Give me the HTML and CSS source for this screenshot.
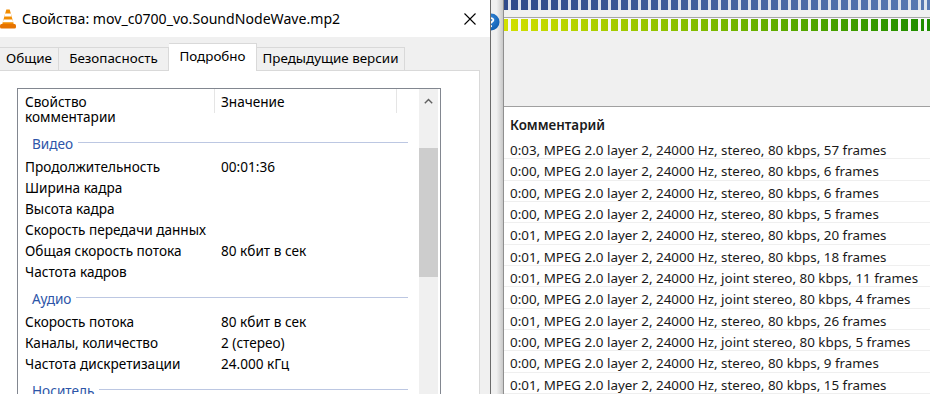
FILE: index.html
```html
<!DOCTYPE html>
<html lang="ru">
<head>
    <meta charset="UTF-8">
    <title>Свойства: mov_c0700_vo.SoundNodeWave.mp2</title>
    <link rel="stylesheet" href="styles.css">
</head>
<body>
    <div class="screen">
        <div class="dialog">
            <div class="titlebar">
                <svg class="vlc" width="16" height="20" viewBox="0 0 16 20">
                    <path d="M6.3 0.5 L9.7 0.5 L14 16 L2 16 Z" fill="#f28c00"/>
                    <path d="M5.2 4.5 L10.8 4.5 L11.6 7.5 L4.4 7.5 Z" fill="#fff"/>
                    <path d="M3.6 10.5 L12.4 10.5 L13.2 13.3 L2.8 13.3 Z" fill="#fff"/>
                    <rect x="0" y="15" width="16" height="4.5" rx="1.5" fill="#e67300"/>
                </svg>
                <span class="title">Свойства: mov_c0700_vo.SoundNodeWave.mp2</span>
                <svg class="close" width="12" height="12" viewBox="0 0 12 12">
                    <path d="M0.5 0.5 L11.5 11.5 M11.5 0.5 L0.5 11.5" stroke="#000" stroke-width="1.1"/>
                </svg>
            </div>
            <div class="tabs">
                <div class="tab tab-general">Общие</div>
                <div class="tab tab-security">Безопасность</div>
                <div class="tab tab-details active">Подробно</div>
                <div class="tab tab-versions">Предыдущие версии</div>
            </div>
            <div class="panel">
                <div class="listbox">
                    <div class="list">
                        <div class="list-head">
                            <div class="col-name">Свойство</div>
                            <div class="col-value">Значение</div>
                        </div>
                        <div class="row row-cut">комментарии</div>

                        <div class="group"><span>Видео</span><i></i></div>
                        <div class="row"><span class="name">Продолжительность</span><span class="value">00:01:36</span></div>
                        <div class="row"><span class="name">Ширина кадра</span></div>
                        <div class="row"><span class="name">Высота кадра</span></div>
                        <div class="row"><span class="name">Скорость передачи данных</span></div>
                        <div class="row"><span class="name">Общая скорость потока</span><span class="value">80 кбит в сек</span></div>
                        <div class="row"><span class="name">Частота кадров</span></div>

                        <div class="group"><span>Аудио</span><i></i></div>
                        <div class="row"><span class="name">Скорость потока</span><span class="value">80 кбит в сек</span></div>
                        <div class="row"><span class="name">Каналы, количество</span><span class="value">2 (стерео)</span></div>
                        <div class="row"><span class="name">Частота дискретизации</span><span class="value">24.000 кГц</span></div>

                        <div class="group"><span>Носитель</span><i></i></div>
                    </div>
                    <div class="scrollbar">
                        <div class="scroll-up">
                            <svg width="9" height="6" viewBox="0 0 9 6"><path d="M0.8 5.2 L4.5 1.5 L8.2 5.2" fill="none" stroke="#606060" stroke-width="1.4"/></svg>
                        </div>
                        <div class="thumb"></div>
                    </div>
                </div>
            </div>
        </div>

        <div class="edge">
            <svg class="help" width="18" height="18" viewBox="0 0 18 18">
                <defs>
                    <radialGradient id="helpFill" cx="40%" cy="35%" r="70%">
                        <stop offset="0" stop-color="#3d8fe0"/>
                        <stop offset="1" stop-color="#0d5cb0"/>
                    </radialGradient>
                </defs>
                <circle cx="9" cy="9" r="8.5" fill="url(#helpFill)"/>
                <path d="M6.6 7 C6.6 4.6 11.4 4.6 11.4 7 C11.4 8.6 9 8.6 9 10.6" fill="none" stroke="#fff" stroke-width="1.8"/>
                <circle cx="9" cy="13.2" r="1.1" fill="#fff"/>
            </svg>
        </div>

        <div class="app">
            <div class="meter meter-blue"></div>
            <div class="meter-sep"></div>
            <div class="meter-track">
                <div class="meter meter-green"></div>
            </div>
            <div class="comments">
                <div class="comments-head">Комментарий</div>
                <div class="comment">0:03, MPEG 2.0 layer 2, 24000 Hz, stereo, 80 kbps, 57 frames</div>
                <div class="comment">0:00, MPEG 2.0 layer 2, 24000 Hz, stereo, 80 kbps, 6 frames</div>
                <div class="comment">0:00, MPEG 2.0 layer 2, 24000 Hz, stereo, 80 kbps, 6 frames</div>
                <div class="comment">0:00, MPEG 2.0 layer 2, 24000 Hz, stereo, 80 kbps, 5 frames</div>
                <div class="comment">0:01, MPEG 2.0 layer 2, 24000 Hz, stereo, 80 kbps, 20 frames</div>
                <div class="comment">0:01, MPEG 2.0 layer 2, 24000 Hz, stereo, 80 kbps, 18 frames</div>
                <div class="comment">0:01, MPEG 2.0 layer 2, 24000 Hz, joint stereo, 80 kbps, 11 frames</div>
                <div class="comment">0:00, MPEG 2.0 layer 2, 24000 Hz, joint stereo, 80 kbps, 4 frames</div>
                <div class="comment">0:01, MPEG 2.0 layer 2, 24000 Hz, stereo, 80 kbps, 26 frames</div>
                <div class="comment">0:00, MPEG 2.0 layer 2, 24000 Hz, joint stereo, 80 kbps, 5 frames</div>
                <div class="comment">0:00, MPEG 2.0 layer 2, 24000 Hz, stereo, 80 kbps, 9 frames</div>
                <div class="comment">0:01, MPEG 2.0 layer 2, 24000 Hz, stereo, 80 kbps, 15 frames</div>
            </div>
        </div>
    </div>
</body>
</html>
```

FILE: styles.css
```css
:root {
    --win-gray: #f0f0f0;
    --tab-border: #d9d9d9;
    --list-border: #828790;
    --group-blue: #2d55a8;
    --group-line: #bcc7e2;
    --text-color: #000;
}

* {
    box-sizing: border-box;
    margin: 0;
    padding: 0;
}

body {
    font-family: 'Noto Sans', 'DejaVu Sans', sans-serif;
    color: var(--text-color);
    background-color: var(--win-gray);
    overflow: hidden;
}

.screen {
    display: flex;
    width: 930px;
    height: 394px;
    overflow: hidden;
}

/* ---- диалог свойств ---- */

.dialog {
    width: 491px;
    flex-shrink: 0;
    background-color: var(--win-gray);
    border-right: 1px solid #6b6b6b;
    display: flex;
    flex-direction: column;
    position: relative;
    z-index: 2;
}

.titlebar {
    height: 37px;
    background-color: #fff;
    display: flex;
    align-items: center;
    padding-right: 14px;
}

.vlc {
    margin-top: 1px;
}

.title {
    font-size: 14.1px;
    margin-left: 6px;
    flex: 1;
    white-space: nowrap;
}

.tabs {
    height: 33px;
    display: flex;
    align-items: flex-end;
    margin-left: -1px;
}

.tab {
    height: 23px;
    font-size: 13.4px;
    line-height: 21px;
    text-align: center;
    border: 1px solid var(--tab-border);
    border-bottom: none;
    border-left: none;
    white-space: nowrap;
}

.tab-general {
    width: 60px;
    border-left: 1px solid var(--tab-border);
}

.tab-security {
    width: 110px;
}

.tab-details {
    width: 88px;
}

.tab-versions {
    width: 148px;
}

.tab.active {
    height: 28px;
    line-height: 25px;
    background-color: #fff;
    margin-bottom: -1px;
    position: relative;
    z-index: 1;
}

.panel {
    flex: 1;
    background-color: #fff;
    border: 1px solid var(--tab-border);
    border-bottom: none;
    margin-left: -1px;
    width: 481px;
    padding: 17px 0 0 17px;
    overflow: hidden;
}

.listbox {
    width: 424px;
    height: 320px;
    border: 1px solid var(--list-border);
    display: flex;
}

.list {
    flex: 1;
    font-size: 13.6px;
}

.list-head {
    display: flex;
    height: 24px;
}

.col-name,
.col-value {
    padding-top: 5px;
    line-height: 15px;
    border-right: 1px solid #e5e5e5;
}

.col-name {
    width: 197px;
    padding-left: 7px;
}

.col-value {
    width: 182px;
    padding-left: 6px;
}

.row {
    display: flex;
    height: 21px;
    line-height: 21px;
    padding-left: 7px;
    white-space: nowrap;
}

.row-cut {
    height: 14px;
    line-height: 7px;
}

.name {
    width: 196px;
}

.group {
    display: flex;
    align-items: flex-start;
    height: 29px;
    padding: 9px 11px 0 14px;
    color: var(--group-blue);
    line-height: 15px;
}

.group i {
    flex: 1;
    height: 1px;
    margin: 6px 0 0 5px;
    background-color: var(--group-line);
}

.scrollbar {
    width: 19px;
    margin-right: 2px;
    background-color: var(--win-gray);
}

.scroll-up {
    height: 17px;
    display: flex;
    justify-content: center;
    align-items: flex-end;
    padding-bottom: 2px;
}

.thumb {
    height: 129px;
    margin-top: 42px;
    background-color: #cdcdcd;
}

/* ---- полоска между окнами ---- */

.edge {
    width: 12px;
    flex-shrink: 0;
    background: linear-gradient(90deg, var(--win-gray) 0, var(--win-gray) 45%, #c9c9c9 100%);
    position: relative;
    overflow: hidden;
}

.help {
    position: absolute;
    left: -9px;
    top: 13px;
}

/* ---- окно с комментариями ---- */

.app {
    flex: 1;
    border-left: 1px solid #8f8f8f;
    background-color: var(--win-gray);
    display: flex;
    flex-direction: column;
    overflow: hidden;
}

.meter {
    height: 11px;
}

.meter-blue {
    background:
        repeating-linear-gradient(90deg, #dfe4ee 0, #dfe4ee 3px, transparent 3px, transparent 10px) -6px 0,
        linear-gradient(90deg, #2f4a8a, #5878b2);
}

.meter-sep {
    height: 1px;
    margin-top: 7px;
    background-color: #a6a6a6;
}

.meter-track {
    height: 14px;
    padding-top: 1px;
    background-color: #f8f8f8;
}

.meter-green {
    height: 12px;
    background:
        repeating-linear-gradient(90deg, #f8f8f8 0, #f8f8f8 3px, transparent 3px, transparent 10px) -6px 0,
        linear-gradient(90deg, #d2e000, #7ab800 50%, #1e8c00);
}

.comments {
    flex: 1;
    margin-top: 75px;
    background-color: #fff;
    border-top: 1px solid #a0a0a0;
    padding-left: 6px;
    font-size: 13.4px;
}

.comments-head {
    height: 31px;
    padding-top: 4px;
    line-height: 29px;
    font-weight: 600;
    color: #1a1a1a;
}

.comment {
    height: 21.33px;
    line-height: 21px;
    padding-top: 2px;
    border-bottom: 1px solid #efefef;
    margin-left: -6px;
    padding-left: 6px;
    color: #1a1a1a;
    white-space: nowrap;
}
```
